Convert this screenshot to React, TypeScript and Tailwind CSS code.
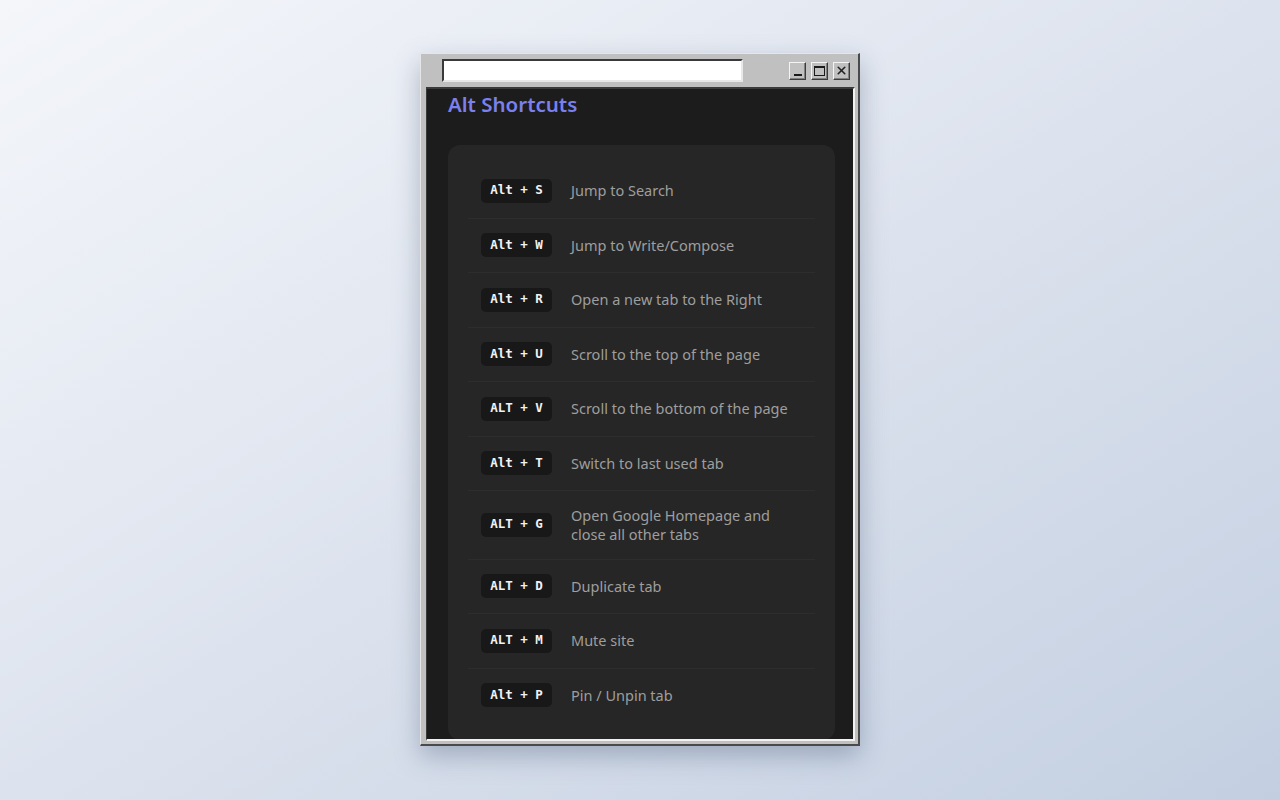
import { X } from "lucide-react";

interface Shortcut {
  keys: string;
  label: string;
}

const SHORTCUTS: Shortcut[] = [
  { keys: "Alt + S", label: "Jump to Search" },
  { keys: "Alt + W", label: "Jump to Write/Compose" },
  { keys: "Alt + R", label: "Open a new tab to the Right" },
  { keys: "Alt + U", label: "Scroll to the top of the page" },
  { keys: "ALT + V", label: "Scroll to the bottom of the page" },
  { keys: "Alt + T", label: "Switch to last used tab" },
  { keys: "ALT + G", label: "Open Google Homepage and close all other tabs" },
  { keys: "ALT + D", label: "Duplicate tab" },
  { keys: "ALT + M", label: "Mute site" },
  { keys: "Alt + P", label: "Pin / Unpin tab" },
];

function WinButton({ children }: { children: React.ReactNode }) {
  return (
    <div className="flex h-[18px] w-[17px] items-center justify-center border border-t-[#f4f4f4] border-l-[#f4f4f4] border-b-[#3c3c3c] border-r-[#3c3c3c] bg-[#c0c0c0] shadow-[inset_-1px_-1px_0_#808080]">
      {children}
    </div>
  );
}

export default function App() {
  return (
    <div className="flex min-h-screen w-full justify-center bg-gradient-to-br from-[#f4f6fa] via-[#dde3ee] to-[#c3cfe1] pt-[53px]">
      <div className="flex h-[693px] w-[440px] flex-col border-t border-l border-b-2 border-r-2 border-t-[#e6e6e6] border-l-[#e6e6e6] border-b-[#4a4a4a] border-r-[#4a4a4a] bg-[#c0c0c0] pl-[5px] pr-[3px] pb-[3px] shadow-[0_10px_24px_rgba(60,80,110,0.35)]">
        {/* title bar */}
        <div className="flex h-[33px] shrink-0 items-center pl-[16px] pr-[5px]">
          <div className="h-[23px] w-[301px] border-2 border-t-[#3a3a3a] border-l-[#3a3a3a] border-b-[#e8e8e8] border-r-[#e8e8e8] bg-white" />
          <div className="ml-auto flex gap-[5px]">
            <WinButton>
              <div className="mt-[8px] h-[2px] w-[8px] bg-[#1a1a1a]" />
            </WinButton>
            <WinButton>
              <div className="h-[10px] w-[11px] border border-t-2 border-[#1a1a1a]" />
            </WinButton>
            <WinButton>
              <X size={13} strokeWidth={3} className="text-[#222]" />
            </WinButton>
          </div>
        </div>

        {/* content */}
        <div className="min-h-0 flex-1 overflow-hidden border-t-2 border-l border-b-2 border-r-2 border-t-[#3a3a3a] border-l-[#3a3a3a] border-b-[#f2f2f2] border-r-[#f2f2f2] bg-[#1c1c1c] pl-[21px] pr-[18px] font-['Noto_Sans',sans-serif]">
          <h1 className="mt-[1px] text-[20.5px] font-semibold leading-[28px] text-[#7b80ec]">
            Alt Shortcuts
          </h1>
          <div className="mt-[27px] rounded-xl bg-[#262626] px-5 pt-[19px] pb-[18px]">
            {SHORTCUTS.map((s, i) => (
              <div
                key={s.keys}
                className={`flex items-center px-[13px] py-[14.75px] ${
                  i < SHORTCUTS.length - 1 ? "border-b border-[#2d2d2d]" : ""
                }`}
              >
                <kbd className="flex h-6 w-[71px] shrink-0 items-center justify-center rounded-[5px] bg-[#181818] font-['DejaVu_Sans_Mono',monospace] text-[12.5px] font-bold text-[#f2f2f2]">
                  {s.keys}
                </kbd>
                <span className="ml-[19px] text-[14.5px] leading-[19px] text-[#9e9e9e]">
                  {s.label}
                </span>
              </div>
            ))}
          </div>
        </div>
      </div>
    </div>
  );
}
